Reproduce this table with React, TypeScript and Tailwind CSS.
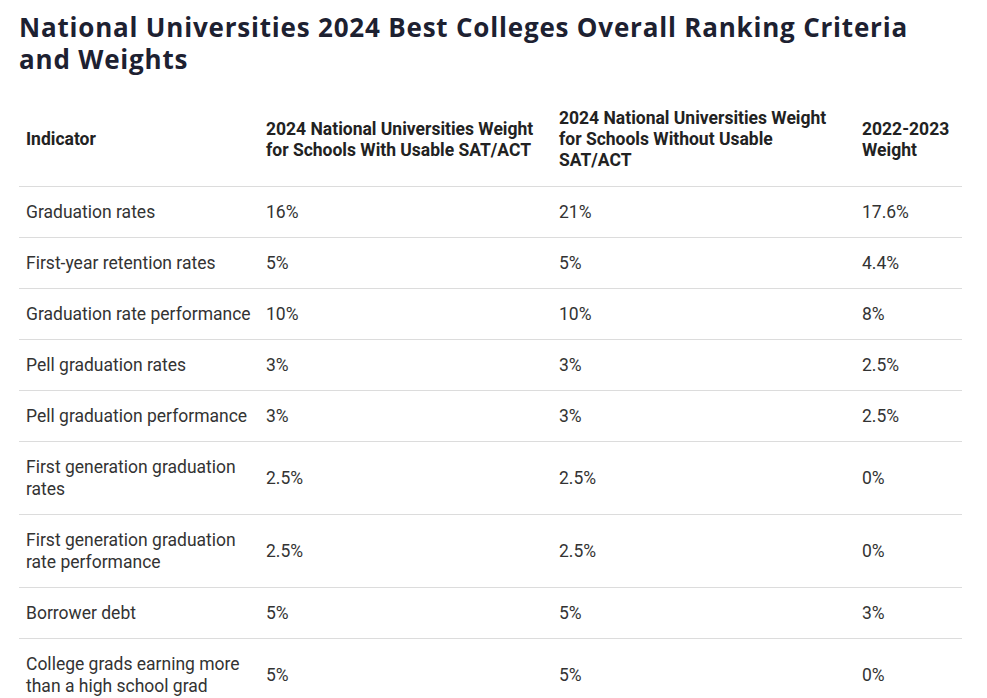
import React from "react";

const rows = [
  { name: "Graduation rates", a: "16%", b: "21%", c: "17.6%" },
  { name: "First-year retention rates", a: "5%", b: "5%", c: "4.4%" },
  { name: "Graduation rate performance", a: "10%", b: "10%", c: "8%" },
  { name: "Pell graduation rates", a: "3%", b: "3%", c: "2.5%" },
  { name: "Pell graduation performance", a: "3%", b: "3%", c: "2.5%" },
  { name: "First generation graduation rates", a: "2.5%", b: "2.5%", c: "0%" },
  { name: "First generation graduation rate performance", a: "2.5%", b: "2.5%", c: "0%" },
  { name: "Borrower debt", a: "5%", b: "5%", c: "3%" },
  { name: "College grads earning more than a high school grad", a: "5%", b: "5%", c: "0%" },
];

export default function App() {
  return (
    <div className="bg-white min-h-screen px-[19px] pt-[11px] font-['Roboto',sans-serif] text-[#333]">
      <h2 className="font-['Open_Sans',sans-serif] font-bold text-[26px] leading-[32px] text-[#1d2131] tracking-[0.8px] w-[930px]">
        National Universities 2024 Best Colleges Overall Ranking Criteria and Weights
      </h2>

      <table className="mt-[18px] w-[943px] border-collapse text-[17.5px] table-fixed">
        <colgroup>
          <col className="w-[240px]" />
          <col className="w-[293px]" />
          <col className="w-[303px]" />
          <col className="w-[107px]" />
        </colgroup>
        <thead>
          <tr className="border-b border-[#dcdcdc] text-left text-[#222] leading-[21px]">
            <th className="px-[7px] py-[15px] font-bold">Indicator</th>
            <th className="px-[7px] py-[15px] font-bold">2024 National Universities Weight for Schools With Usable SAT/ACT</th>
            <th className="px-[7px] py-[15px] font-bold">2024 National Universities Weight for Schools Without Usable SAT/ACT</th>
            <th className="px-[7px] py-[15px] font-bold">2022-2023 Weight</th>
          </tr>
        </thead>
        <tbody className="leading-[22px]">
          {rows.map((r) => (
            <tr key={r.name} className="border-b border-[#dcdcdc]">
              <td className="px-[7px] py-[14px] align-middle">{r.name}</td>
              <td className="px-[7px] py-[14px] align-middle">{r.a}</td>
              <td className="px-[7px] py-[14px] align-middle">{r.b}</td>
              <td className="px-[7px] py-[14px] align-middle">{r.c}</td>
            </tr>
          ))}
        </tbody>
      </table>
    </div>
  );
}
